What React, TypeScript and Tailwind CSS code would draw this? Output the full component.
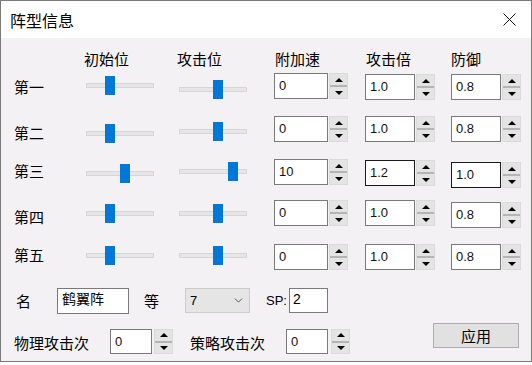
import { ChevronDown } from "lucide-react";

const cjk = "font-['Noto_Sans_CJK_SC',sans-serif]";
const num = "font-['Liberation_Sans','Noto_Sans_CJK_SC',sans-serif]";

type Row = {
  label: string;
  h: number;
  lab: number;
  t1: number;
  t2: number;
  p1: number;
  p2: number;
  ins: number[];
  vals: string[];
  dark: boolean[];
};

const rows: Row[] = [
  { label: "第一", h: 43, lab: 4, t1: 3, t2: 7, p1: 19, p2: 34, ins: [0, 1, 1], vals: ["0", "1.0", "0.8"], dark: [false, false, false] },
  { label: "第二", h: 43, lab: 7, t1: 8, t2: 6, p1: 19, p2: 34, ins: [0, 0, 0], vals: ["0", "1.0", "0.8"], dark: [false, false, false] },
  { label: "第三", h: 41, lab: 2, t1: 5, t2: 3, p1: 34, p2: 49, ins: [0, 1, 3], vals: ["10", "1.2", "1.0"], dark: [false, true, true] },
  { label: "第四", h: 44, lab: 7, t1: 4, t2: 4, p1: 19, p2: 34, ins: [0, 0, 2], vals: ["0", "1.0", "0.8"], dark: [false, false, false] },
  { label: "第五", h: 44, lab: 1, t1: 2, t2: 2, p1: 19, p2: 34, ins: [0, 0, 0], vals: ["0", "1.0", "0.8"], dark: [false, false, false] },
];

function Slider({ pos }: { pos: number }) {
  return (
    <div className="relative w-[68px] h-[19px]">
      <div className="absolute left-0 right-0 top-[7px] h-[5px] bg-[#e6e6e6] border border-[#d6d6d6]" />
      <div className="absolute top-0 w-[10px] h-[19px] bg-[#0078d7]" style={{ left: pos }} />
    </div>
  );
}

function Spinner({ h }: { h: number }) {
  return (
    <div className="w-[19px] flex flex-col bg-[#e4e4e4] border border-[#dadada]" style={{ height: h }}>
      <div className="flex-1 flex items-center justify-center">
        <div className="w-0 h-0 border-x-[4px] border-x-transparent border-b-[4px] border-b-black" />
      </div>
      <div className="h-[2px] bg-[#b4b4b4]" />
      <div className="flex-1 flex items-center justify-center">
        <div className="w-0 h-0 border-x-[4px] border-x-transparent border-t-[4px] border-t-black" />
      </div>
    </div>
  );
}

function Spin({ value, w, dark, h = 26, gap = 1 }: { value: string; w: number; dark?: boolean; h?: number; gap?: number }) {
  return (
    <div className="flex" style={{ columnGap: gap }}>
      <div
        className={`bg-white border ${dark ? "border-[#1a1a1a]" : "border-[#7a7a7a]"} pl-[4px] flex items-center text-[13px] text-[#111] ${num}`}
        style={{ width: w, height: h }}
      >
        {value}
      </div>
      <Spinner h={h} />
    </div>
  );
}

export default function App() {
  return (
    <div className={`w-[532px] h-[365px] bg-white ${cjk}`}>
      <div className="w-[532px] h-[362px] border border-[#7a7a7a] flex flex-col">
        <div className="h-[37px] bg-white flex items-center justify-between shrink-0">
          <span className="ml-[9px] text-[16px] leading-[20px] text-black">阵型信息</span>
          <svg width="13" height="13" viewBox="0 0 13 13" className="mr-[15px]">
            <path d="M0.5 0.5 L12.5 12.5 M12.5 0.5 L0.5 12.5" stroke="#111" strokeWidth="1" />
          </svg>
        </div>

        <div className="flex-1 bg-[#f3f1f4] pl-[13px] flex flex-col text-[15px] leading-[20px] text-black">
          <div className="mt-[11px] h-[20px] flex">
            <span className="ml-[70px] w-[93px]">初始位</span>
            <span className="w-[98px]">攻击位</span>
            <span className="w-[91px]">附加速</span>
            <span className="w-[85px]">攻击倍</span>
            <span>防御</span>
          </div>

          <div className="mt-[4px] flex flex-col">
            {rows.map((r) => (
              <div key={r.label} className="flex items-start" style={{ height: r.h }}>
                <span className="w-[72px]" style={{ marginTop: r.lab }}>{r.label}</span>
                <div style={{ marginTop: r.t1 }}>
                  <Slider pos={r.p1} />
                </div>
                <div className="ml-[25px]" style={{ marginTop: r.t2 }}>
                  <Slider pos={r.p2} />
                </div>
                <div className="ml-[27px]" style={{ marginTop: r.ins[0] }}>
                  <Spin value={r.vals[0]} w={54} dark={r.dark[0]} />
                </div>
                <div className="ml-[17px]" style={{ marginTop: r.ins[1] }}>
                  <Spin value={r.vals[1]} w={50} dark={r.dark[1]} />
                </div>
                <div className="ml-[16px]" style={{ marginTop: r.ins[2] }}>
                  <Spin value={r.vals[2]} w={50} dark={r.dark[2]} />
                </div>
              </div>
            ))}
          </div>

          <div className="h-[35px] flex items-start">
            <span className="ml-[2px] w-[41px] mt-[3px]">名</span>
            <div className={`w-[72px] h-[26px] bg-white border border-[#7a7a7a] pl-[4px] text-[14px] leading-[20px] ${num}`}>
              鹤翼阵
            </div>
            <span className="ml-[15px] w-[41px] mt-[3px]">等</span>
            <div className={`w-[65px] h-[25px] bg-[#e5e5e5] border border-[#cccccc] flex items-center justify-between pl-[4px] pr-[4px] text-[13px] ${num}`}>
              <span>7</span>
              <ChevronDown size={13} strokeWidth={1.6} color="#444" />
            </div>
            <span className={`ml-[16px] w-[23px] mt-[3px] text-[13px] ${num}`}>SP:</span>
            <div className={`w-[39px] h-[25px] bg-white border border-[#7a7a7a] pl-[3px] text-[14px] leading-[20px] ${num}`}>
              2
            </div>
          </div>

          <div className="flex items-start">
            <span className="w-[96px] mt-[10px]">物理攻击次</span>
            <div className="mt-[6px]">
              <Spin value="0" w={42} h={25} gap={2} />
            </div>
            <span className="ml-[17px] w-[96px] mt-[10px]">策略攻击次</span>
            <div className="mt-[6px]">
              <Spin value="0" w={42} h={25} gap={3} />
            </div>
            <button className="ml-[83px] w-[86px] h-[25px] bg-[#e1e1e1] border border-[#adadad] text-[15px] leading-[20px]">
              应用
            </button>
          </div>
        </div>
      </div>
    </div>
  );
}
